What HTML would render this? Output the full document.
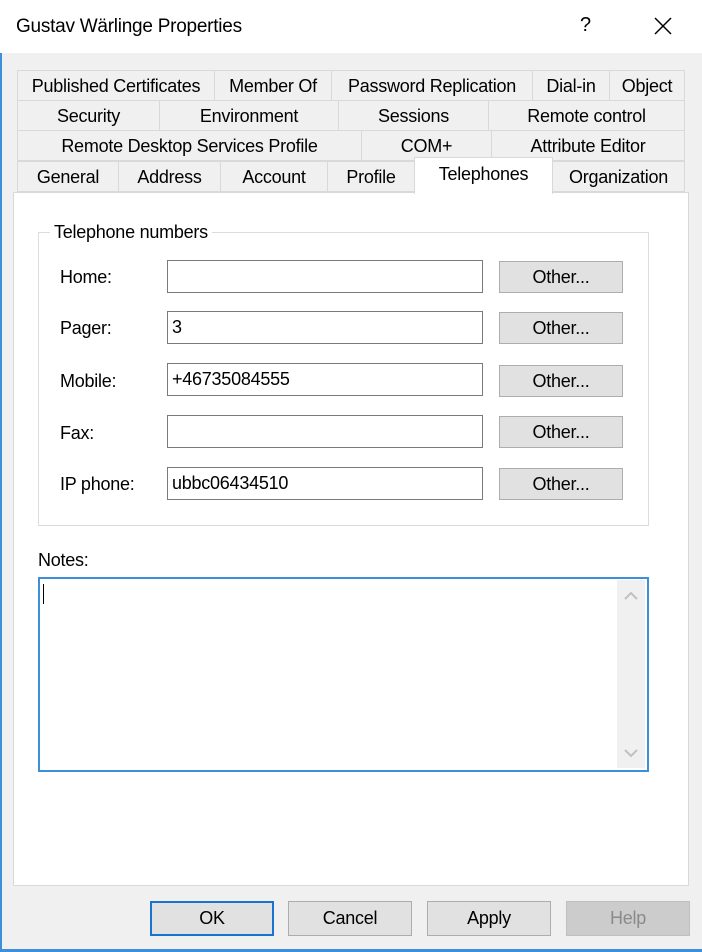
<!DOCTYPE html>
<html><head><meta charset="utf-8"><style>
*{box-sizing:border-box;margin:0;padding:0}
body{width:702px;height:952px;background:#f0f0f0;font-family:"Liberation Sans",sans-serif;font-size:18px;color:#000;position:relative;overflow:hidden;letter-spacing:-0.25px}
.a{position:absolute}
.title{left:0;top:0;width:702px;height:53px;background:#fff}
.tab{position:absolute;border:1px solid #d9d9d9;background:#f0f0f0;text-align:center;line-height:30px;height:31px;white-space:nowrap}
.lbl{position:absolute;left:60px}
.inp{position:absolute;left:167px;width:316px;height:33px;background:#fff;border:1px solid #7a7a7a;padding-left:4px;line-height:31px}
.oth{position:absolute;left:499px;width:124px;height:32px;background:#e1e1e1;border:1px solid #adadad;text-align:center;line-height:30px}
.btn{position:absolute;top:901px;width:124px;height:35px;background:#e1e1e1;border:1px solid #adadad;text-align:center;line-height:33px}
</style></head><body>
<div class="a" style="left:0;top:0;width:2px;height:952px;background:#3c8fd8"></div>
<div class="a" style="left:0;top:949px;width:702px;height:3px;background:#3c8fd8"></div>
<div class="a title"></div>
<div class="a" style="left:16px;top:16px;font-size:19px">Gustav Wärlinge Properties</div>
<div class="a" style="left:580px;top:14px;font-size:20px">?</div>
<svg class="a" style="left:653px;top:16px" width="20" height="20"><path d="M2 2L18 18M18 2L2 18" stroke="#000" stroke-width="1.5"/></svg>

<div class="tab" style="left:17px;top:70px;width:198px">Published Certificates</div>
<div class="tab" style="left:214px;top:70px;width:118px">Member Of</div>
<div class="tab" style="left:331px;top:70px;width:202px">Password Replication</div>
<div class="tab" style="left:532px;top:70px;width:78px">Dial-in</div>
<div class="tab" style="left:609px;top:70px;width:76px">Object</div>
<div class="tab" style="left:17px;top:100px;width:143px">Security</div>
<div class="tab" style="left:159px;top:100px;width:180px">Environment</div>
<div class="tab" style="left:338px;top:100px;width:151px">Sessions</div>
<div class="tab" style="left:488px;top:100px;width:197px">Remote control</div>
<div class="tab" style="left:17px;top:130px;width:345px">Remote Desktop Services Profile</div>
<div class="tab" style="left:361px;top:130px;width:131px">COM+</div>
<div class="tab" style="left:491px;top:130px;width:194px">Attribute Editor</div>
<div class="tab" style="left:17px;top:161px;width:102px">General</div>
<div class="tab" style="left:118px;top:161px;width:103px">Address</div>
<div class="tab" style="left:220px;top:161px;width:108px">Account</div>
<div class="tab" style="left:327px;top:161px;width:88px">Profile</div>
<div class="tab" style="left:552px;top:161px;width:133px">Organization</div>

<div class="a" style="left:13px;top:192px;width:676px;height:694px;background:#fff;border:1px solid #d9d9d9"></div>
<div class="a" style="left:414px;top:157px;width:139px;height:37px;background:#fff;border:1px solid #d9d9d9;border-bottom:none;text-align:center;line-height:32px">Telephones</div>

<div class="a" style="left:38px;top:232px;width:611px;height:294px;border:1px solid #dcdcdc"></div>
<div class="a" style="left:50px;top:222px;background:#fff;padding:0 4px">Telephone numbers</div>

<div class="lbl" style="top:267px">Home:</div><div class="inp" style="top:260px"></div><div class="oth" style="top:261px">Other...</div>
<div class="lbl" style="top:318px">Pager:</div><div class="inp" style="top:311px">3</div><div class="oth" style="top:312px">Other...</div>
<div class="lbl" style="top:371px">Mobile:</div><div class="inp" style="top:363px">+46735084555</div><div class="oth" style="top:365px">Other...</div>
<div class="lbl" style="top:423px">Fax:</div><div class="inp" style="top:415px"></div><div class="oth" style="top:416px">Other...</div>
<div class="lbl" style="top:474px">IP phone:</div><div class="inp" style="top:467px">ubbc06434510</div><div class="oth" style="top:468px">Other...</div>

<div class="a" style="left:38px;top:550px">Notes:</div>
<div class="a" style="left:38px;top:577px;width:611px;height:195px;border:2px solid #3c8fd8;background:#fff"></div>
<div class="a" style="left:43px;top:584px;width:1px;height:20px;background:#000"></div>
<div class="a" style="left:617px;top:580px;width:28px;height:188px;background:#f0f0f0"></div>
<svg class="a" style="left:623px;top:590px" width="16" height="12"><path d="M2 9L8 3L14 9" stroke="#c0c0c0" stroke-width="2" fill="none"/></svg>
<svg class="a" style="left:623px;top:747px" width="16" height="12"><path d="M2 3L8 9L14 3" stroke="#c0c0c0" stroke-width="2" fill="none"/></svg>

<div class="btn" style="left:150px;border:2px solid #1a73d0;line-height:31px">OK</div>
<div class="btn" style="left:288px">Cancel</div>
<div class="btn" style="left:427px">Apply</div>
<div class="btn" style="left:566px;background:#cccccc;border-color:#bfbfbf;color:#8a8a8a">Help</div>
</body></html>
